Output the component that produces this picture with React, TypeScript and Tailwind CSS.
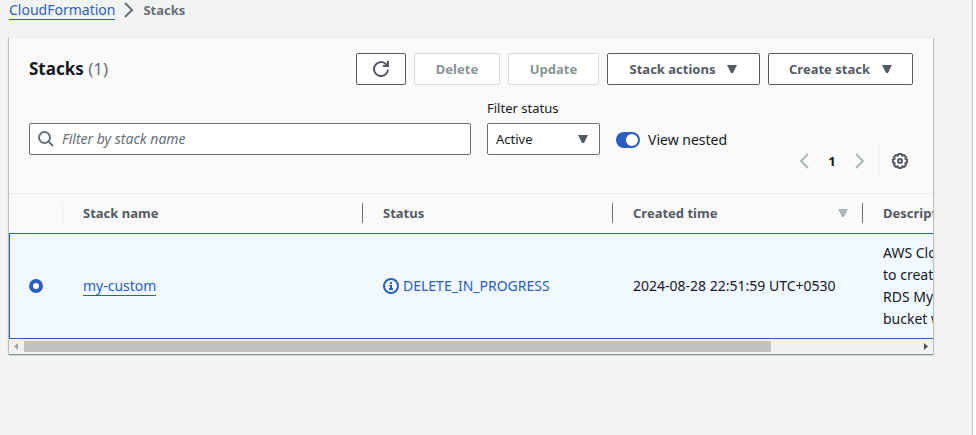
import React, { useState } from "react";

const outlineButton =
  "flex h-8 items-center justify-center rounded-[2px] border border-[#545b64] bg-white px-4 text-[13px] font-bold text-[#545b64]";
const disabledButton =
  "flex h-8 items-center justify-center rounded-[2px] border border-[#d5dbdb] bg-white px-4 text-[13px] font-bold text-[#879596]";

function Caret({ className }: { className: string }) {
  return (
    <svg viewBox="0 0 10 8" className={`h-2 w-[10px] ${className}`} fill="currentColor" aria-hidden="true">
      <path d="M0 0h10L6 8H4z" />
    </svg>
  );
}

function Chevron({ className, flip }: { className: string; flip?: boolean }) {
  return (
    <svg viewBox="0 0 16 16" className={`size-4 ${className}`} fill="none" stroke="currentColor" strokeWidth="2" aria-hidden="true">
      <path d={flip ? "M12 1 5 8l7 7" : "M4 1l7 7-7 7"} />
    </svg>
  );
}

function RefreshIcon() {
  return (
    <svg viewBox="0 0 16 16" className="size-4 shrink-0" fill="none" stroke="currentColor" strokeWidth="2" aria-hidden="true">
      <path d="M15 8.500a7 7 0 1 1-2.500-5.800L15 5" />
      <path d="M10 5h5V0" />
    </svg>
  );
}

function SearchIcon() {
  return (
    <svg viewBox="0 0 16 16" className="size-4 shrink-0 text-[#687078]" fill="none" stroke="currentColor" strokeWidth="2" aria-hidden="true">
      <circle cx="6.500" cy="6.500" r="5.500" />
      <path d="m10.500 10.500 4.500 4.500" />
    </svg>
  );
}

function GearIcon() {
  return (
    <svg viewBox="0 0 16 16" className="block size-4" fill="none" stroke="currentColor" strokeWidth="2" strokeLinejoin="round" aria-hidden="true">
      <path d="M6.500 1h3l.6 1.700 1.900-.7 2 2-.7 1.900 1.700.6v3l-1.700.6.7 1.900-2 2-1.900-.7-.6 1.700h-3l-.6-1.700-1.900.7-2-2 .7-1.900L1 9.500v-3l1.700-.6L2 4l2-2 1.900.7z" />
      <circle cx="8" cy="8" r="2" />
    </svg>
  );
}

function InfoIcon() {
  return (
    <svg viewBox="0 0 16 16" className="size-4 shrink-0" fill="none" stroke="currentColor" strokeWidth="2" aria-hidden="true">
      <circle cx="8" cy="8" r="7" />
      <path d="M7 4h2v2H7zM6 7h3v3h1v2H6v-2h1V8H6z" fill="currentColor" stroke="none" />
    </svg>
  );
}

function ColumnHeader({ label, sorted }: { label: string; sorted?: boolean }) {
  return (
    <div className="flex h-5 items-center justify-between pr-[14px] pl-5">
      <span>{label}</span>
      {sorted && <Caret className="text-[#aab7b8]" />}
    </div>
  );
}

export default function App() {
  const [nested, setNested] = useState(true);
  const cell = "border-y border-[#2a5fc0] px-5";
  const head = "p-0 pb-px";

  return (
    <div className="flex min-h-screen bg-white font-['Noto_Sans',sans-serif] text-[14px] leading-[22px] text-[#16191f]">
      <main className="mr-[3px] min-w-0 flex-1 border-r border-[#c3caca] bg-[#f2f3f3] pr-[39px] pl-[9px]">
        <nav aria-label="Breadcrumbs" className="flex h-[37px] items-start gap-[6px] pt-px">
          <a href="#cloudformation" className="border-b border-[#2a5fc0] leading-[18px] text-[#2a5fc0]">CloudFormation</a>
          <Chevron className="mt-px text-[#687078]" />
          <span className="text-[13px] font-bold leading-[18px] text-[#687078]">Stacks</span>
        </nav>

        <section className="border-t border-[#eaeded] bg-[#fafafa] shadow-[0_1px_1px_0_#879596,1px_1px_1px_0_#c3caca,-1px_1px_1px_0_#c3caca]">
          <header className="flex items-center justify-between px-5 pt-[15px]">
            <h1 className="text-[17px] font-bold">
              Stacks <span className="font-normal text-[#687078]">(1)</span>
            </h1>
            <div className="flex gap-2">
              <button type="button" aria-label="Refresh" className={`${outlineButton} w-[50px]`}><RefreshIcon /></button>
              <button type="button" disabled className={`${disabledButton} min-w-[86px]`}>Delete</button>
              <button type="button" disabled className={`${disabledButton} min-w-[91px]`}>Update</button>
              <button type="button" className={`${outlineButton} min-w-[153px]`}>Stack actions<Caret className="ml-3" /></button>
              <button type="button" className={`${outlineButton} min-w-[145px]`}>Create stack<Caret className="ml-3" /></button>
            </div>
          </header>

          <div className="flex items-end border-b border-[#eaeded] px-5 pt-3 pb-4">
            <div className="mb-[22px] flex flex-1 items-end">
              <label className="flex h-8 w-[442px] items-center gap-2 rounded-[2px] border border-[#687078] bg-white px-2">
                <SearchIcon />
                <input
                  type="search"
                  aria-label="Filter by stack name"
                  placeholder="Filter by stack name"
                  className="min-w-0 flex-1 outline-none placeholder:text-[#687078] placeholder:italic"
                />
              </label>
              <div className="ml-4 flex w-[113px] flex-col gap-1 text-[13px]">
                <label htmlFor="status">Filter status</label>
                <div className="relative">
                  <select id="status" className="h-8 w-full appearance-none rounded-[2px] border border-[#687078] bg-white px-2">
                    <option>Active</option>
                  </select>
                  <Caret className="pointer-events-none absolute top-3 right-3 text-[#545b64]" />
                </div>
              </div>
              <label className="mb-1 ml-4 flex items-center gap-2">
                <input
                  type="checkbox"
                  role="switch"
                  checked={nested}
                  onChange={(e) => setNested(e.target.checked)}
                  className="flex h-4 w-6 appearance-none items-center rounded-full bg-[#879596] px-[2px] before:size-3 before:rounded-full before:bg-white checked:justify-end checked:bg-[#2a5fc0]"
                />
                View nested
              </label>
            </div>
            <div className="flex h-8 items-center text-[#aab7b8]">
              <button type="button" disabled aria-label="Previous page"><Chevron flip className="block" /></button>
              <button type="button" className="w-10 text-center text-[13px] font-bold text-[#16191f]">1</button>
              <button type="button" disabled aria-label="Next page"><Chevron className="block" /></button>
              <div className="ml-[10px] h-8 border-l border-[#eaeded]" />
              <button type="button" aria-label="Preferences" className="mr-[5px] ml-[13px] text-[#545b64]"><GearIcon /></button>
            </div>
          </div>

          <div className="overflow-hidden">
            <table className="w-[1104px] table-fixed border-separate border-spacing-0 text-left">
              <colgroup>
                <col className="w-[54px]" />
                <col className="w-[300px]" />
                <col className="w-[250px]" />
                <col className="w-[250px]" />
                <col className="w-[250px]" />
              </colgroup>
              <thead className="text-[13px] text-[#545b64]">
                <tr className="h-[39px]">
                  <th aria-label="Selection" className={head}><div className="h-5 border-r border-[#eaeded]" /></th>
                  <th className={head}><div className="border-r border-[#687078]"><ColumnHeader label="Stack name" /></div></th>
                  <th className={head}><div className="border-r border-[#687078]"><ColumnHeader label="Status" /></div></th>
                  <th className={head} aria-sort="descending"><div className="border-r border-[#687078]"><ColumnHeader label="Created time" sorted /></div></th>
                  <th className={head}><ColumnHeader label="Description" /></th>
                </tr>
              </thead>
              <tbody className="bg-[#f1f8ff]">
                <tr className="h-[106px]">
                  <td className="border border-r-0 border-[#2a5fc0] pl-[19px]">
                    <input
                      type="radio"
                      name="stack"
                      aria-label="my-custom"
                      defaultChecked
                      className="block size-[14px] appearance-none rounded-full border border-[#687078] bg-white checked:border-[4px] checked:border-[#2a5fc0]"
                    />
                  </td>
                  <td className={cell}>
                    <a href="#my-custom" className="inline-block border-b border-[#2a5fc0] leading-[18px] text-[#2a5fc0]">my-custom</a>
                  </td>
                  <td className={cell}>
                    <span className="flex items-center gap-1 text-[#2a5fc0]"><InfoIcon />DELETE_IN_PROGRESS</span>
                  </td>
                  <td className={`${cell} whitespace-nowrap`}>2024-08-28 22:51:59 UTC+0530</td>
                  <td className={cell}>
                    AWS CloudFormation template<br />to create an instance of<br />RDS MySQL and an S3<br />bucket with a policy
                  </td>
                </tr>
              </tbody>
            </table>
          </div>

          <div aria-hidden="true" className="flex h-[15px] items-center bg-[#f1f1f1]">
            <svg viewBox="0 0 15 15" className="size-[15px]" fill="#a3a3a3"><path d="M9 4v7L5 7.500z" /></svg>
            <div className="h-[11px] flex-[51] bg-[#c1c1c1]" />
            <div className="flex-[10]" />
            <svg viewBox="0 0 15 15" className="size-[15px]" fill="#505050"><path d="M6 4v7l4-3.500z" /></svg>
          </div>
        </section>
      </main>
    </div>
  );
}
